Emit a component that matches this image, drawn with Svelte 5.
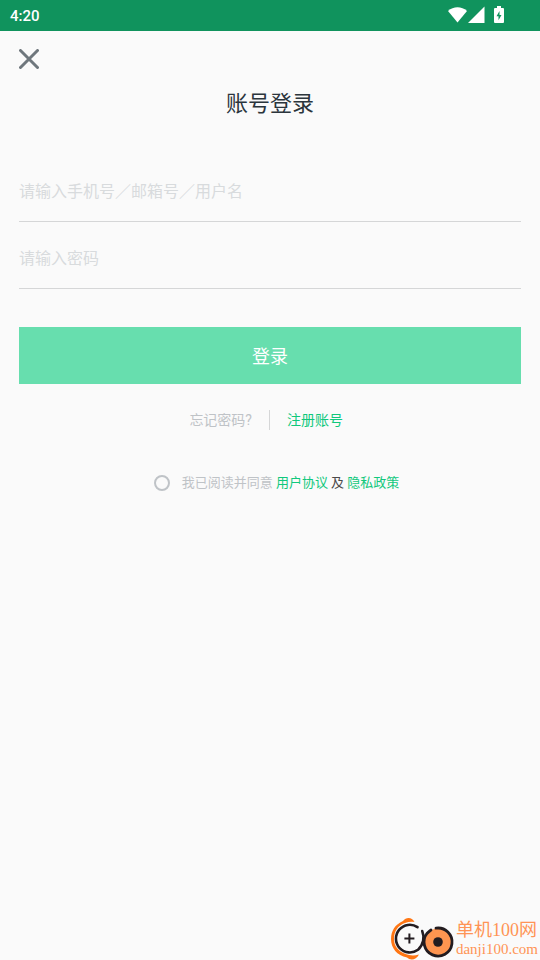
<script>
  let account = $state('');
  let password = $state('');
  let agreed = $state(false);
</script>

<div class="screen">
  <header class="status">
    <span class="time">4:20</span>
    <svg class="indicators" width="58" height="20" viewBox="0 0 58 20" aria-hidden="true">
      <path d="M0 5C5.5 0 13.5 0 19 5L9.5 16.500Z" fill="#fff" />
      <path d="M36.5 .5V17H20Z" fill="#fff" />
      <path d="M49 0h4v2h2a1 1 0 0 1 1 1V16a1 1 0 0 1-1 1h-8a1 1 0 0 1-1-1V3a1 1 0 0 1 1-1h2Z" fill="#fff" />
      <path d="M51.5 5 48.5 10.3H50.5v4L53.5 9H51.5Z" fill="#10935d" />
    </svg>
  </header>

  <main>
    <button class="close" type="button" aria-label="关闭">
      <svg width="20" height="20" viewBox="0 0 20 20">
        <path d="M1.5 1.5 18.5 18.5M18.5 1.5 1.5 18.5" fill="none" stroke="#6f777d" stroke-width="3" stroke-linecap="round" />
      </svg>
    </button>

    <h1>账号登录</h1>

    <form onsubmit={(e) => e.preventDefault()}>
      <input class="field" type="text" aria-label="账号" placeholder="请输入手机号／邮箱号／用户名" bind:value={account} />
      <input class="field" type="password" aria-label="密码" placeholder="请输入密码" bind:value={password} />
      <button class="submit" type="submit">登录</button>

      <nav class="links">
        <a class="forgot" href="#forgot">忘记密码?</a>
        <a class="register" href="#register">注册账号</a>
      </nav>

      <div class="terms">
        <input id="agree" type="checkbox" bind:checked={agreed} />
        <p>
          <label for="agree">我已阅读并同意</label>
          <a href="#terms">用户协议</a> 及 <a href="#privacy">隐私政策</a>
        </p>
      </div>
    </form>
  </main>

  <aside class="mark">
    <svg width="66" height="44" viewBox="0 0 66 44" aria-hidden="true">
      <path d="M24.5 6C22 1 16 1 13 5C5 8.5 1 15 1 23C1 32 7 39.5 17 41.5C20 44.5 26 44.5 29 38.5C24 40 19.5 39.500 15.5 38C8 35 4 30 4 23C4 15 8 9.500 15 7C18 6 21 5.500 24.500 6Z" fill="#ff7614" />
      <circle cx="48" cy="26" r="13.5" fill="#ff9550" />
      <path d="M27.5 11.2A13.8 13.8 0 1 0 28 33.7C33.5 29 34.8 21 32.2 15" fill="none" stroke="#231c20" stroke-width="2.6" stroke-linecap="round" />
      <path d="M46 12.200A14 14 0 1 1 37.200 17.200C38.500 15.800 39.500 15 41 14" fill="none" stroke="#231c20" stroke-width="2.8" stroke-linecap="round" />
      <circle cx="48" cy="26" r="4.8" fill="#231c20" />
      <path d="M19.400 17.500v10M14.400 22.500h10" stroke="#231c20" stroke-width="2" />
    </svg>
    <div class="words">
      <strong>单机100网</strong>
      <span>danji100.com</span>
    </div>
  </aside>
</div>

<style>
  :global(body) {
    background: #fafafa;
  }
  .screen {
    position: relative;
    box-sizing: border-box;
    min-height: 100vh;
    font-family: Roboto, "Noto Sans CJK SC", sans-serif;
    color: #2b353c;
  }
  .status {
    display: flex;
    align-items: center;
    justify-content: space-between;
    height: 31px;
    padding: 1px 34px 0 10px;
    box-sizing: border-box;
    background: #10935d;
    color: #fff;
  }
  .time {
    font-size: 15px;
    font-weight: 500;
    line-height: 30px;
  }
  main {
    padding: 18px 19px 0;
  }
  button {
    border: 0;
    padding: 0;
    font: inherit;
    cursor: pointer;
  }
  .close {
    display: block;
    width: 20px;
    height: 20px;
    background: none;
  }
  .close svg {
    display: block;
  }
  h1 {
    margin: 19px 0 0;
    font-size: 22px;
    font-weight: 400;
    line-height: 32px;
    text-align: center;
  }
  form {
    padding-top: 35px;
  }
  .field {
    display: block;
    box-sizing: border-box;
    width: 100%;
    height: 67px;
    padding: 6px 0 0;
    border: 0;
    border-bottom: 1px solid #d5d6d7;
    border-radius: 0;
    outline: 0;
    background: none;
    font: inherit;
    font-size: 16px;
    color: #2b353c;
  }
  .field::placeholder {
    color: #d8dbdd;
    opacity: 1;
  }
  .submit {
    display: block;
    width: 100%;
    height: 57px;
    margin-top: 38px;
    padding-bottom: 2px;
    background: #67deae;
    color: #fff;
    font-size: 18px;
  }
  a {
    color: #10c87c;
    text-decoration: none;
  }
  .links {
    display: grid;
    grid-template-columns: 1fr 1fr;
    margin-top: 26px;
    font-size: 14px;
    line-height: 20px;
  }
  .forgot {
    padding-right: 17px;
    border-right: 1px solid #d5d6d7;
    color: #bfc3c7;
    text-align: right;
  }
  .register {
    padding-left: 17px;
  }
  .terms {
    display: flex;
    align-items: center;
    justify-content: center;
    gap: 12px;
    margin-top: 43px;
    padding-left: 13px;
    font-size: 13px;
    line-height: 20px;
    color: #4a4a4a;
  }
  .terms p {
    margin: 0;
  }
  .terms label {
    color: #bfc3c7;
  }
  .terms input {
    appearance: none;
    box-sizing: border-box;
    width: 16px;
    height: 16px;
    margin: 0;
    border: 2px solid #bfc3c7;
    border-radius: 50%;
  }
  .terms input:checked {
    background: #13c67d;
  }
  .mark {
    position: absolute;
    right: 2px;
    bottom: 0;
    display: flex;
    align-items: center;
    color: #ff9455;
  }
  .mark svg {
    display: block;
  }
  .words {
    display: flex;
    flex-direction: column;
    padding-top: 2px;
    font-family: "Liberation Serif", "Noto Sans CJK SC", serif;
    white-space: nowrap;
  }
  .words strong {
    font-size: 18px;
    font-weight: 400;
    line-height: 20px;
  }
  .words span {
    font-size: 15px;
    line-height: 18px;
  }
</style>
